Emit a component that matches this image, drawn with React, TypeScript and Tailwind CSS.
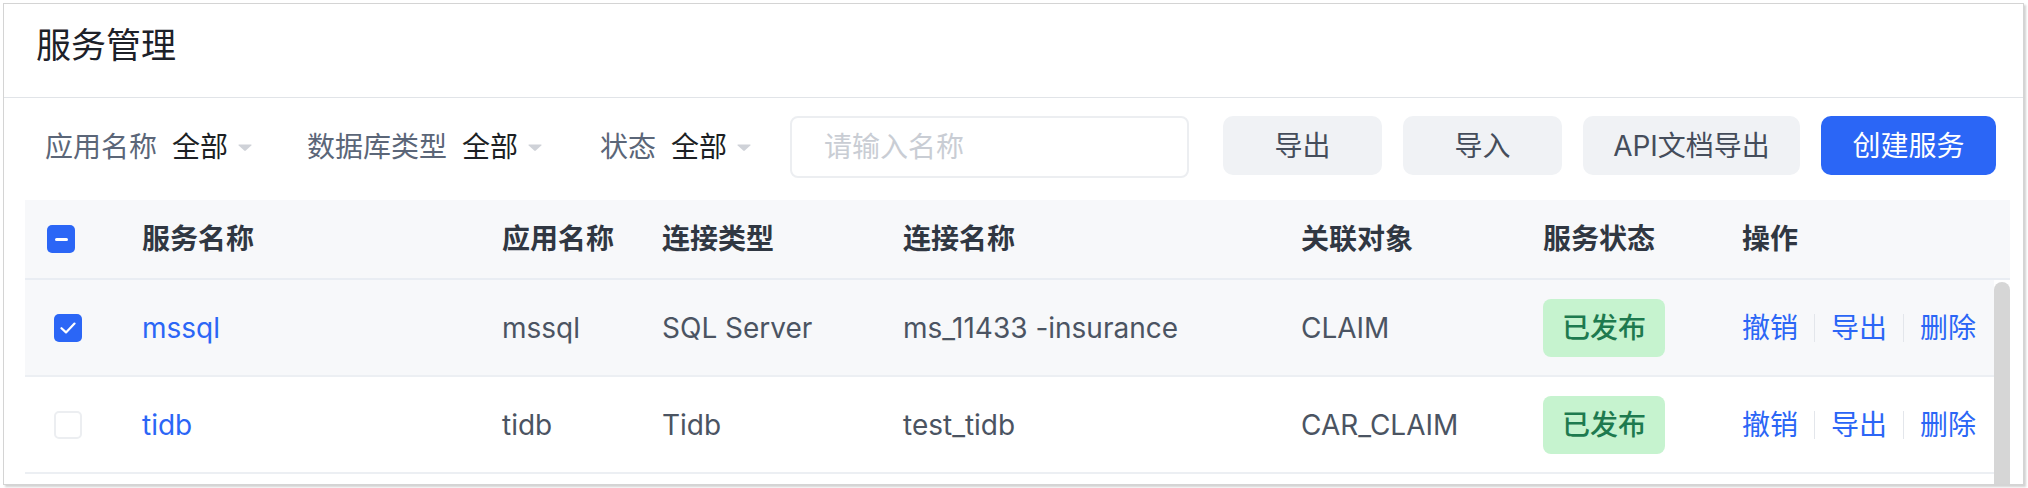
import type { ReactNode } from "react";

const FONT = { fontFamily: 'Inter, "Noto Sans CJK SC", sans-serif' };

type Row = {
  name: string;
  app: string;
  type: string;
  conn: string;
  target: string;
  checked: boolean;
};

const rows: Row[] = [
  { name: "mssql", app: "mssql", type: "SQL Server", conn: "ms_11433 -insurance", target: "CLAIM", checked: true },
  { name: "tidb", app: "tidb", type: "Tidb", conn: "test_tidb", target: "CAR_CLAIM", checked: false }
];

const cols = "grid grid-cols-[117px_360px_160px_241px_398px_242px_199px_1fr] items-center";

function Caret() {
  return (
    <svg width="16" height="10" viewBox="0 0 16 10" className="ml-[9px]">
      <path d="M2 2.5 H14 Q15 2.5 14.3 3.4 L8.8 8.6 Q8 9.3 7.2 8.6 L1.7 3.4 Q1 2.5 2 2.5 Z" fill="#cfd2d8" />
    </svg>
  );
}

function Filter({ label, className = "" }: { label: string; className?: string }) {
  return (
    <div className={`flex items-center ${className}`}>
      <span className="text-[#5b6678]">{label}</span>
      <span className="ml-[15px] text-[#1c1f24]">全部</span>
      <Caret />
    </div>
  );
}

function GrayButton({ children, className = "" }: { children: ReactNode; className?: string }) {
  return (
    <button className={`flex h-[59px] items-center justify-center rounded-[10px] bg-[#f0f2f5] text-[#454d5b] ${className}`}>
      {children}
    </button>
  );
}

function Checkbox({ state }: { state: "checked" | "partial" | "empty" }) {
  if (state === "empty") {
    return <span className="block h-[28px] w-[28px] rounded-[5px] border-2 border-[#eceef1] bg-white" />;
  }
  return (
    <span className="flex h-[28px] w-[28px] items-center justify-center rounded-[5px] bg-[#2b66f6]">
      {state === "partial" ? (
        <span className="block h-[3px] w-[13px] rounded-full bg-white" />
      ) : (
        <svg width="16" height="12" viewBox="0 0 16 12">
          <path d="M1.5 6.2 L6 10.4 L14.5 1.6" fill="none" stroke="white" strokeWidth="2.2" strokeLinecap="round" strokeLinejoin="round" />
        </svg>
      )}
    </span>
  );
}

function Actions() {
  return (
    <div className="flex items-center gap-[16px] text-[#2b66f6]">
      <span>撤销</span>
      <span className="h-[28px] w-px bg-[#e3e6eb]" />
      <span>导出</span>
      <span className="h-[28px] w-px bg-[#e3e6eb]" />
      <span>删除</span>
    </div>
  );
}

export default function App() {
  return (
    <div className="h-[488px] w-[2028px] bg-white p-[3px] text-[28px]" style={FONT}>
      <div className="flex h-[482px] w-[2021px] flex-col overflow-hidden border border-[#d4d4d4] bg-white shadow-[2px_2px_2px_rgba(0,0,0,0.18)]">
        <div className="h-[94px] shrink-0 border-b border-[#e1e4e8] pl-[32px] pt-[19px]">
          <h1 className="text-[35px] leading-[45px] text-[#1d2129]">服务管理</h1>
        </div>

        <div className="h-[102px] shrink-0 pl-[41px] pr-[27px] pt-[18px]">
          <div className="flex h-[62px] items-center">
            <Filter label="应用名称" />
            <Filter label="数据库类型" className="ml-[54px]" />
            <Filter label="状态" className="ml-[57px]" />
            <div className="ml-[38px] flex h-[62px] w-[399px] items-center rounded-[8px] border-2 border-[#eceef1] pl-[32px] text-[#c9cdd4]">
              请输入名称
            </div>
            <div className="ml-auto flex items-center gap-[21px] self-start">
              <GrayButton className="w-[159px]">导出</GrayButton>
              <GrayButton className="w-[159px]">导入</GrayButton>
              <GrayButton className="w-[217px]">API文档导出</GrayButton>
              <button className="flex h-[59px] w-[175px] items-center justify-center rounded-[10px] bg-[#2b66f6] text-white">
                创建服务
              </button>
            </div>
          </div>
        </div>

        <div className="ml-[21px] mr-[13px] flex min-h-0 flex-1 flex-col">
          <div className={`${cols} h-[80px] shrink-0 border-b-2 border-[#e9edf3] bg-[#f7f8fa] font-semibold text-[#303742]`}>
            <div className="pl-[22px]">
              <Checkbox state="partial" />
            </div>
            <div>服务名称</div>
            <div>应用名称</div>
            <div>连接类型</div>
            <div>连接名称</div>
            <div>关联对象</div>
            <div>服务状态</div>
            <div>操作</div>
          </div>

          <div className="flex min-h-0 flex-1">
            <div className="flex-1">
              {rows.map((row) => (
                <div
                  key={row.name}
                  className={`${cols} h-[97px] border-b-2 border-[#eceff3] text-[#4b5462] ${row.checked ? "bg-[#f7f8fa]" : "bg-white"}`}
                >
                  <div className="pl-[29px]">
                    <Checkbox state={row.checked ? "checked" : "empty"} />
                  </div>
                  <div className="text-[#2b66f6]">{row.name}</div>
                  <div>{row.app}</div>
                  <div>{row.type}</div>
                  <div>{row.conn}</div>
                  <div>{row.target}</div>
                  <div>
                    <span className="inline-flex h-[58px] items-center rounded-[8px] bg-[#c6f3cf] px-[19px] font-medium text-[#1e7a4f]">
                      已发布
                    </span>
                  </div>
                  <Actions />
                </div>
              ))}
            </div>
            <div className="w-[16px] pt-[2px]">
              <div className="h-full rounded-t-full bg-[#d6d6d6]" />
            </div>
          </div>
        </div>
      </div>
    </div>
  );
}
